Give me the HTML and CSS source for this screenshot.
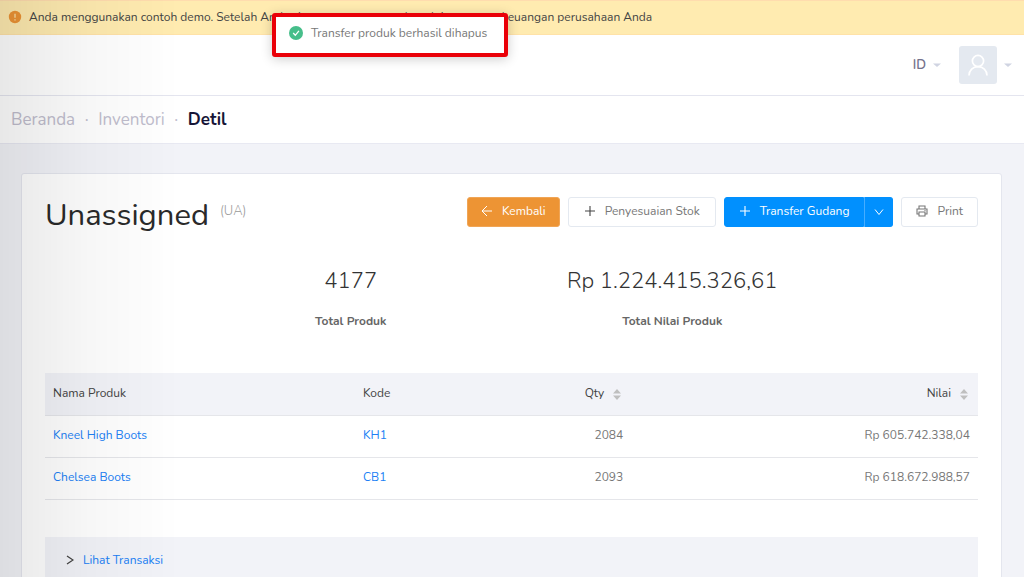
FILE: index.html
```html
<!DOCTYPE html>
<html lang="id">
<head>
<meta charset="utf-8">
<meta name="viewport" content="width=device-width, initial-scale=1">
<title>Unassigned - Inventori</title>
<link rel="stylesheet" href="styles.css">
</head>
<body>
<div class="banner">
  <svg class="banner-icon" viewBox="0 0 14 14" aria-hidden="true"><circle cx="7" cy="7" r="6.2" fill="#ed9435"/><path d="M7 3.8v4M7 9.2v1.2" stroke="#ffe9b0" stroke-width="1.2"/></svg>
  <span>Anda menggunakan contoh demo. Setelah Anda siap, <a class="banner-link" href="#">Klik di sini</a> untuk mulai mengatur keuangan perusahaan Anda</span>
</div>
<div class="toast" role="status">
  <svg class="toast-icon" viewBox="0 0 14 14" aria-hidden="true"><circle cx="7" cy="7" r="7" fill="#46be8a"/><path d="M4.2 7l2.1 2.3 3.6-4.4" fill="none" stroke="#fff" stroke-width="1.3"/></svg>
  <span>Transfer produk berhasil dihapus</span>
</div>
<header class="topbar">
  <button class="lang" type="button">ID <svg class="caret" viewBox="0 0 8 4" aria-hidden="true"><path d="M0 .4h8L4 4z" fill="#d0d4e2"/></svg></button>
  <button class="user" type="button" aria-label="Akun">
    <span class="avatar"><svg class="avatar-icon" viewBox="0 0 22 24" aria-hidden="true"><g fill="none" stroke="#fff" stroke-width="1.7"><circle cx="11" cy="8" r="5.6"/><path d="M2 22.5c0-5.3 4-8.9 9-8.9s9 3.600 9 8.900"/></g></svg></span>
    <svg class="caret" viewBox="0 0 8 4" aria-hidden="true"><path d="M0 .4h8L4 4z" fill="#d0d4e2"/></svg>
  </button>
</header>
<nav class="crumbs" aria-label="Breadcrumb">
  <a class="crumb" href="#">Beranda</a><span class="dot">·</span><a class="crumb" href="#">Inventori</a><span class="dot">·</span><strong class="current">Detil</strong>
</nav>
<main class="card">
  <div class="head">
    <h1 class="title">Unassigned</h1><span class="code">(UA)</span>
    <div class="actions">
      <button class="btn back" type="button"><svg class="icon" viewBox="0 0 12 12" aria-hidden="true"><path d="M11 6H1M6 1L1 6l5 5" fill="none" stroke="currentColor"/></svg>Kembali</button>
      <button class="btn adjust" type="button"><svg class="icon dark" viewBox="0 0 12 12" aria-hidden="true"><path d="M6 1v10M1 6h10" stroke="currentColor" stroke-width="1.1"/></svg>Penyesuaian Stok</button>
      <div class="split">
        <button class="btn primary" type="button"><svg class="icon" viewBox="0 0 12 12" aria-hidden="true"><path d="M6 1v10M1 6h10" stroke="currentColor" stroke-width="1.1"/></svg>Transfer Gudang</button>
        <button class="btn primary more" type="button" aria-label="Opsi transfer"><svg class="chevron" viewBox="0 0 10 10" aria-hidden="true"><path d="M1 2.500l4 5 4-5" fill="none" stroke="currentColor"/></svg></button>
      </div>
      <button class="btn" type="button"><svg class="icon" viewBox="0 0 12 12" aria-hidden="true"><path d="M3 4V1h6v3M3 9H1V4h10v5H9M3 7h6v4H3zM8.500 5.500h1" fill="none" stroke="currentColor" stroke-width="1.100"/></svg>Print</button>
    </div>
  </div>
  <div class="stats">
    <div class="stat"><div class="value">4177</div><div class="label">Total Produk</div></div>
    <div class="stat"><div class="value">Rp 1.224.415.326,61</div><div class="label">Total Nilai Produk</div></div>
  </div>
  <table class="table">
    <colgroup><col class="c-name"><col class="c-code"><col class="c-qty"><col></colgroup>
    <thead>
      <tr><th>Nama Produk</th><th>Kode</th><th class="num">Qty<svg class="sort" viewBox="0 0 8 11" aria-hidden="true"><path d="M0 4.500L4 0l4 4.500zM0 6.500h8L4 11z" fill="#bfbfbf"/></svg></th><th class="num">Nilai<svg class="sort" viewBox="0 0 8 11" aria-hidden="true"><path d="M0 4.500L4 0l4 4.500zM0 6.500h8L4 11z" fill="#bfbfbf"/></svg></th></tr>
    </thead>
    <tbody>
      <tr><td><a href="#">Kneel High Boots</a></td><td><a href="#">KH1</a></td><td class="num">2084</td><td class="num">Rp 605.742.338,04</td></tr>
      <tr><td><a href="#">Chelsea Boots</a></td><td><a href="#">CB1</a></td><td class="num">2093</td><td class="num">Rp 618.672.988,57</td></tr>
    </tbody>
  </table>
  <button class="panel" type="button"><svg class="panel-icon" viewBox="0 0 8 10" aria-hidden="true"><path d="M1 1l6 4-6 4" fill="none" stroke="#444" stroke-width="1.300"/></svg>Lihat Transaksi</button>
</main>
</body>
</html>
```
FILE: styles.css
```css
* { box-sizing: border-box; }
html { height: 100%; overflow: hidden; }
body {
  margin: 0;
  min-height: 100%;
  background: #f2f3f8;
  color: #777;
  font: 400 12px/20px Nunito, "Open Sans", sans-serif;
}
/* Shade cast over the left side of the page */
body::after {
  content: "";
  position: fixed;
  inset: 0 auto 0 0;
  width: 180px;
  background: linear-gradient(90deg, rgba(0, 0, 0, .09), rgba(0, 0, 0, .03) 50%, rgba(0, 0, 0, 0));
  pointer-events: none;
}
svg { flex: none; }
a { color: #2080f5; text-decoration: none; }
button { margin: 0; font: inherit; color: inherit; cursor: pointer; }
.banner {
  display: flex;
  align-items: center;
  gap: 7px;
  height: 35px;
  padding: 0 8px 2px;
  background: #ffebb0;
  border-top: 1px solid #ffdcae;
  border-bottom: 1px solid #ffe2a8;
  color: #444;
  white-space: nowrap;
}
.banner-icon { width: 14px; height: 14px; }
.banner-link { color: inherit; font-weight: 700; }
.toast {
  position: absolute;
  top: 13px;
  left: 272px;
  z-index: 2;
  display: flex;
  align-items: center;
  gap: 8px;
  height: 44px;
  padding: 0 12px 4px 13px;
  width: 236px;
  background: #fff;
  border: 4px solid #ea0008;
  border-radius: 3px;
  box-shadow: 0 2px 12px rgba(0, 0, 0, .2);
  white-space: nowrap;
}
.toast-icon { width: 14px; height: 14px; }
.topbar {
  display: flex;
  justify-content: flex-end;
  align-items: center;
  gap: 18px;
  height: 61px;
  padding: 0 12px;
  background: #fff;
  border-bottom: 1px solid #e4e5ef;
}
.lang, .user { display: flex; align-items: center; gap: 7px; padding: 0; border: 0; background: none; }
.lang { color: #74728c; font-size: 13px; font-weight: 600; }
.caret { width: 8px; height: 4px; }
.avatar {
  display: grid;
  place-items: center;
  width: 38px;
  height: 38px;
  background: #e4e9f0;
  border-radius: 3px;
}
.avatar-icon { width: 22px; height: 24px; }
.crumbs {
  display: flex;
  align-items: center;
  height: 48px;
  padding: 0 11px;
  background: #fff;
  border-bottom: 1px solid #e8e9f2;
  color: #c0bdcd;
  font-size: 17px;
}
.crumb { color: inherit; }
.dot { width: 23px; text-align: center; }
.current { color: #161537; font-weight: 700; }
.card {
  margin: 29px 22px 0 21px;
  padding: 23px 23px 0;
  background: #fff;
  border: 1px solid #e4e6ee;
  border-radius: 3px;
}
.head { display: flex; align-items: flex-start; }
.title { margin: 0; color: #2a2a2a; font-size: 31px; font-weight: 400; line-height: 36px; }
.code { margin: 4px 0 0 11px; color: #999; font-size: 13px; font-weight: 300; }
.actions { display: flex; gap: 8px; margin-left: auto; }
.btn {
  display: flex;
  align-items: center;
  justify-content: center;
  gap: 9px;
  height: 30px;
  padding: 0 14px 2px;
  background: #fff;
  border: 1px solid #e4e9f0;
  border-radius: 3px;
  white-space: nowrap;
}
.icon { width: 12px; height: 12px; }
.dark { color: #444; }
.back { padding: 0 13px 2px; background: #ed9434; border-color: #f0a556; color: #fff; }
.adjust { padding: 0 15px 2px; }
.split { display: flex; }
.primary { background: #0190fe; border-color: #0190fe; color: #fff; border-radius: 3px 0 0 3px; }
.more { width: 29px; padding: 0; border-left-color: #46adff; border-radius: 0 3px 3px 0; }
.chevron { width: 10px; height: 10px; }
.stats { display: grid; grid-template-columns: 1fr 1fr; margin: 32px 145px 42px; text-align: center; }
.value { color: #333; font-size: 22px; font-weight: 300; line-height: 32px; }
.label { margin-top: 14px; color: #666; font-weight: 700; }
.table { width: 100%; border-collapse: collapse; table-layout: fixed; }
.c-name { width: 310px; }
.c-code { width: 13%; }
.c-qty { width: 155px; }
th, td { height: 42px; padding: 0 8px 2px; text-align: left; border-bottom: 1px solid #e5e6ea; font-weight: 400; }
th { background: #f2f3f8; color: #444; }
.num { text-align: right; }
.sort { width: 8px; height: 11px; margin: 0 2px -3px 9px; }
.panel {
  display: flex;
  align-items: center;
  gap: 9px;
  width: 100%;
  height: 60px;
  margin-top: 37px;
  padding: 0 21px 13px;
  border: 0;
  background: #f2f3f8;
  color: #2080f5;
}
.panel-icon { width: 8px; height: 10px; }
```
